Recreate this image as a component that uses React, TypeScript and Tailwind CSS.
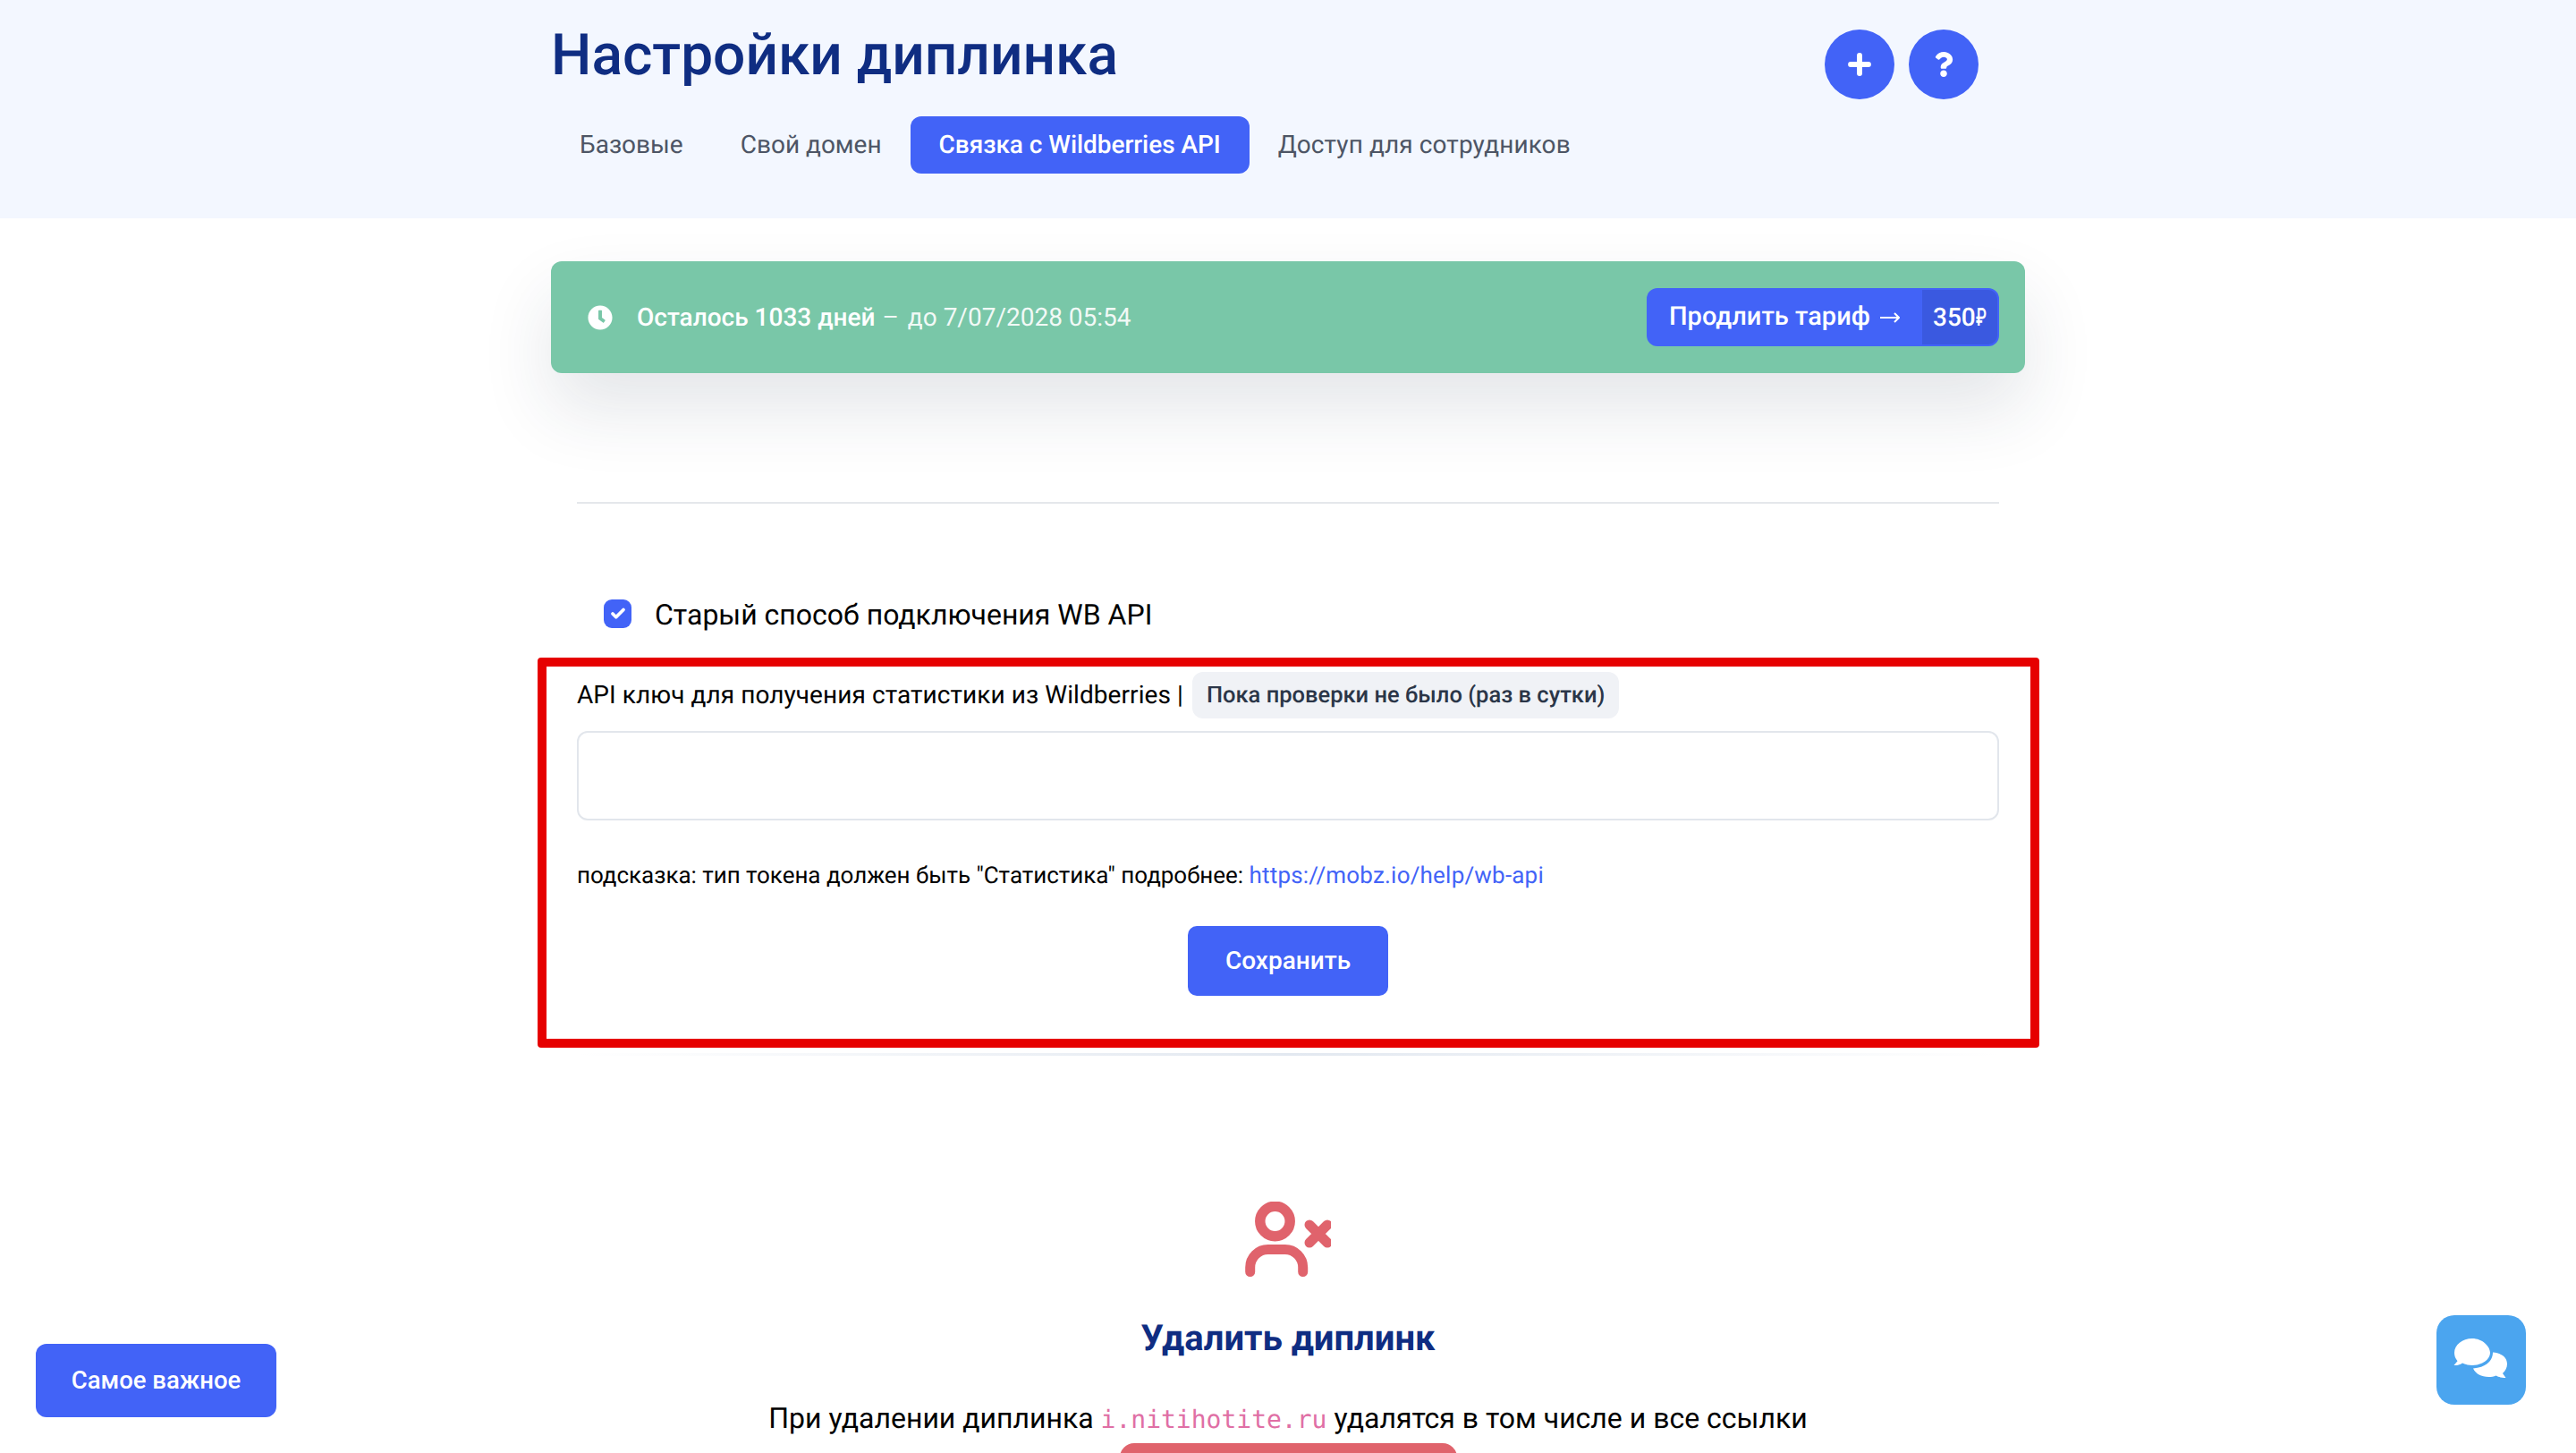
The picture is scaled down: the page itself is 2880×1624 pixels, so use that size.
import React from 'react';
import { Plus, Check } from 'lucide-react';
import { FaQuestion } from 'react-icons/fa';

const App: React.FC = () => {
  return (
    <div className="relative h-[1624px] w-full overflow-hidden bg-white font-['Roboto',sans-serif] text-black [text-rendering:geometricPrecision]">
      {/* Header */}
      <header className="h-[244px] bg-[#f3f7ff]">
        <div className="relative mx-auto w-[1648px]">
          <h1 className="h-[130px] pt-[23px] text-[64px] font-medium leading-[78px] text-[#0f2d82]">Настройки диплинка</h1>
          <nav className="flex text-[28px] leading-[64px] text-[#4d5565]">
            <a className="px-[32px]">Базовые</a>
            <a className="px-[32px]">Свой домен</a>
            <a className="rounded-[12px] bg-[#4263f7] px-[32px] font-medium tracking-[-0.05px] text-white">Связка с Wildberries API</a>
            <a className="px-[32px] tracking-[0.1px]">Доступ для сотрудников</a>
          </nav>
          <div className="absolute left-[1424px] top-[33px] flex gap-[16px]">
            <span className="flex h-[78px] w-[78px] items-center justify-center rounded-full bg-[#4263f7] text-white">
              <Plus size={34} strokeWidth={4.2} />
            </span>
            <span className="flex h-[78px] w-[78px] items-center justify-center rounded-full bg-[#4263f7] text-white">
              <FaQuestion size={28} />
            </span>
          </div>
        </div>
      </header>

      <main className="mx-auto w-[1648px] pt-[48px]">
        {/* Tariff banner */}
        <div className="flex h-[125px] items-center justify-between rounded-[12px] bg-[#79c7a8] pl-[41px] pr-[29px] text-white shadow-[0_40px_80px_rgba(30,50,70,0.12)]">
          <div className="flex items-center text-[28px]">
            <svg viewBox="0 0 512 512" className="mr-[27px] h-[28px] w-[28px]" fill="currentColor">
              <path d="M256 8C119 8 8 119 8 256s111 248 248 248 248-111 248-248S393 8 256 8zm57 350-88-64c-3-2-5-6-5-10V116c0-7 5-12 12-12h48c7 0 12 5 12 12v140l63 46c5 4 6 11 3 17l-28 39c-4 5-11 6-17 3z" />
            </svg>
            <span className="font-medium">Осталось 1033 дней</span>
            <span className="ml-[8px] opacity-90">–</span>
            <span className="ml-[10px] opacity-90">до 7/07/2028 05:54</span>
          </div>
          <div className="flex h-[65px] w-[394px] items-stretch rounded-[12px] bg-[#4263f7] p-[2px] text-[29px] font-medium leading-[61px]">
            <span className="flex flex-1 items-center pl-[23px]">
              Продлить тариф
              <svg viewBox="0 0 22 12" className="ml-[11px] h-[12px] w-[22px]" fill="none" stroke="currentColor" strokeWidth="2">
                <path d="M0 6h21M16 1l5 5-5 5" />
              </svg>
            </span>
            <span className="relative flex w-[84px] rounded-r-[10px] bg-[#3a59e0] pl-[12px] text-[28px]">
              350
              <span className="inline-block origin-left scale-x-[0.62]">₽</span>
            </span>
          </div>
        </div>

        <div className="px-[29px]">
          <hr className="mt-[144px] border-0 border-t-[2px] border-[#e5e7eb]" />

          <label className="ml-[30px] mt-[107px] flex h-[32px] items-center text-[32px]">
            <span className="mr-[26px] flex h-[32px] w-[31px] items-center justify-center rounded-[9px] bg-[#4263f7] text-white">
              <Check size={18} strokeWidth={5} />
            </span>
            <span className="relative top-[1px]">Старый способ подключения WB API</span>
          </label>

          <div className="mt-[49px] flex h-[52px] items-center text-[28px]">
            <span className="tracking-[0.07px]">API ключ для получения статистики из Wildberries |</span>
            <span className="ml-[10px] flex h-[52px] items-center rounded-[12px] bg-[#f0f2f6] px-[16px] text-[25.5px] font-medium text-[#2b3648]">Пока проверки не было (раз в сутки)</span>
          </div>

          <input className="mt-[14px] block h-[100px] w-full rounded-[12px] border-[2px] border-[#e2e6ec] bg-white" />

          <p className="mt-[45px] text-[26px] leading-[34px] tracking-[-0.03px]">
            подсказка: тип токена должен быть "Статистика" подробнее: <a className="tracking-[0.2px] text-[#4263f7]">https://mobz.io/help/wb-api</a>
          </p>

          <div className="mt-[39px] flex justify-center">
            <button className="h-[78px] w-[224px] rounded-[10px] bg-[#4263f7] text-[28px] font-medium text-white">Сохранить</button>
          </div>

          <div className="mt-[64px] h-[3px] bg-gradient-to-r from-transparent via-[#e2e8f0] to-transparent" />
        </div>

        {/* Delete section */}
        <div className="mt-[163px] flex flex-col items-center">
          <svg viewBox="0 0 96 84" className="h-[84px] w-[96px]" fill="none" stroke="#e0636c" strokeWidth="11" strokeLinecap="round">
            <circle cx="33.500" cy="22" r="16.700" strokeWidth="11.500" />
            <path d="M5.700 78.500v-5a20 20 0 0 1 20-20h19a20 20 0 0 1 20 20v5" />
            <path d="M72 26l20 20M92 26L72 46" />
          </svg>
          <h2 className="mt-[45px] text-[40px] font-bold leading-[48px] text-[#0f2d82]">Удалить диплинк</h2>
          <p className="mt-[41px] text-[32px] leading-[48px]">
            При удалении диплинка <code className="font-['DejaVu_Sans_Mono',monospace] text-[28px] text-[#e06fa5]">i.nitihotite.ru</code> удалятся в том числе и все ссылки
          </p>
          <div className="mt-[2px] h-[80px] w-[377px] rounded-[16px] bg-[#e0636c]" />
        </div>
      </main>

      {/* Review annotation */}
      <div className="absolute left-[601px] top-[735px] h-[436px] w-[1679px] rounded-[4px] border-[10px] border-[#e60000]" />

      <button className="absolute left-[40px] top-[1502px] h-[82px] w-[269px] rounded-[12px] bg-[#4263f7] text-[27.5px] font-medium text-white">Самое важное</button>

      <div className="absolute left-[2724px] top-[1470px] flex h-[100px] w-[100px] items-center justify-center rounded-[20px] bg-[#4ba5ef]">
        <svg viewBox="0 0 62 50" className="h-[50px] w-[62px]" fill="white">
          <path d="M21 1C10 1 1 8 1 17c0 3.500 1.200 6.500 3.500 9.200L.5 31c4 .3 7-.8 9.500-2.500 3 1.500 7 2.500 11 2.500 11 0 20-6.500 20-14S32 1 21 1z" />
          <path d="M44 16.500c0 10-8.500 17-22 18 3 6 9 9.500 17.500 9.500 3 0 5.500-.5 8-1.500 2.500 1.500 6.500 2.500 11 2.500l-3.500-5c3-3 5-6.500 5-10.500 0-6.500-5-12-16-13z" />
        </svg>
      </div>
    </div>
  );
};

export default App;
